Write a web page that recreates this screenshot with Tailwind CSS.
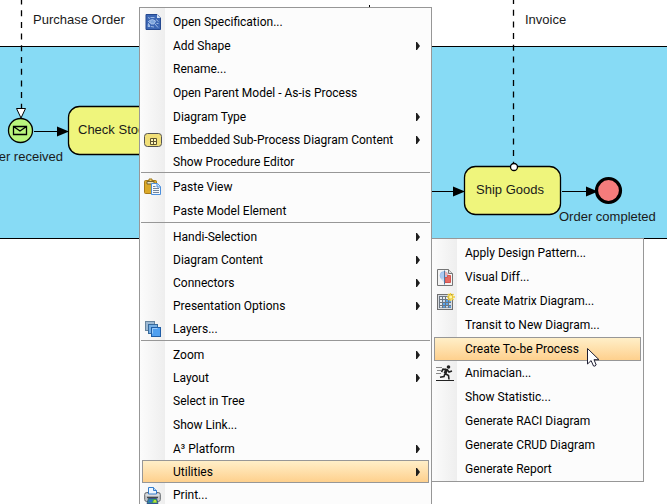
<!DOCTYPE html>
<html lang="en">
<head>
<meta charset="utf-8">
<title>Process diagram</title>
<script src="https://cdn.jsdelivr.net/npm/@tailwindcss/browser@4"></script>
</head>
<body class="bg-white">
<main class="relative h-screen overflow-hidden bg-white">

  <!-- Pool -->
  <div class="absolute inset-x-0 top-[46px] h-[193px] border-y border-black bg-[#87dbf5]"></div>

  <!-- Process diagram -->
  <svg class="absolute left-0 top-0 h-[260px] w-[667px] font-['Liberation_Sans',Arial,sans-serif] text-[13px]" viewBox="0 0 667 260" fill="none" stroke="#000">
    <path d="M21.500 -1.500V108" stroke-dasharray="6 5.700" stroke-width="1.300"/>
    <path d="M16.500 108.500h9l-4.500 9.500z" fill="#fff"/>
    <circle cx="20.500" cy="130.500" r="12" fill="#b9f57c" stroke-width="1.300"/>
    <path d="M13.500 126.500h13v8h-13zl6.500 4.500 6.500-4.500" stroke-width="1.300"/>
    <path d="M34 131.500H60"/>
    <path d="M57 126.500l12 5-12 5z" fill="#000" stroke="none"/>
    <rect x="68.500" y="106.500" width="96" height="48" rx="11" fill="#eff57c" stroke-width="1.300"/>
    <path d="M369.500 5v3"/>
    <path d="M513.500 -2V164" stroke-dasharray="6 5.700" stroke-width="1.300"/>
    <path d="M431 191.500H455"/>
    <path d="M453 186.500l12 5-12 5z" fill="#000" stroke="none"/>
    <rect x="464.500" y="166.500" width="96" height="48" rx="11" fill="#eff57c" stroke-width="1.300"/>
    <circle cx="514" cy="167" r="3.500" fill="#fff" stroke-width="1.300"/>
    <path d="M562 191.500H588"/>
    <path d="M586 186.500l12 5-12 5z" fill="#000" stroke="none"/>
    <circle cx="608.500" cy="190.500" r="12" fill="#f57c7c" stroke-width="3.200"/>
    <g fill="#1a1a1a" stroke="none">
      <text x="33" y="24">Purchase Order</text>
      <text x="78" y="134">Check Stock</text>
      <text x="63" y="161" text-anchor="end">Order received</text>
      <text x="525" y="24">Invoice</text>
      <text x="476" y="194">Ship Goods</text>
      <text x="559" y="221">Order completed</text>
    </g>
  </svg>

  <!-- Context menu -->
  <div role="menu" aria-label="Diagram" class="absolute left-[139px] top-[7px] w-[293px] border border-[#979797] bg-[#fcfcfc] bg-linear-to-r from-[#fcfcfc] to-[#eeeeee] bg-[length:25px_100%] bg-no-repeat px-[2px] py-[2px] font-['Segoe_UI','Roboto',sans-serif] text-[12px] text-black">
    <button role="menuitem" class="flex h-6 w-full items-center"><span class="flex w-[31px] pl-[3px]"><svg class="size-4" viewBox="0 0 16 16"><path d="M1 .5h11L15.500 4v11.500H1z" fill="#3c67b4" stroke="#24488f"/><path d="M12 .5V4h3.500z" fill="#dce8fa"/><path d="M3 3.500l2 1M5.500 3.500h4M3 12.500h2l-1.500-3zM4.500 6.500l3-1 3 1.500-1.500 3H6zM11 5.500l2.500 2M10 10l3 3.500M6 12.500l3 .5M11.500 9.500h2M3 7l2 2" fill="#7fa6dd" stroke="#b4cdf0" stroke-width=".8"/></svg></span>Open Specification...</button>
    <button role="menuitem" class="flex h-[23px] w-full items-center pl-[31px]"><span class="flex-1 text-left">Add Shape</span><svg class="mr-2 h-2 w-[5px]" viewBox="0 0 5 8"><path d="M0 0h1l3 4-3 4H0z" fill="#1e1e1e"/></svg></button>
    <button role="menuitem" class="flex h-6 w-full items-center pl-[31px]">Rename...</button>
    <button role="menuitem" class="flex h-6 w-full items-center pl-[31px]">Open Parent Model - As-is Process</button>
    <button role="menuitem" class="flex h-[23px] w-full items-center pl-[31px]"><span class="flex-1 text-left">Diagram Type</span><svg class="mr-2 h-2 w-[5px]" viewBox="0 0 5 8"><path d="M0 0h1l3 4-3 4H0z" fill="#1e1e1e"/></svg></button>
    <button role="menuitem" class="flex h-[23px] w-full items-center"><span class="flex w-[31px] pl-[2px]"><svg class="h-[14px] w-[18px]" viewBox="0 0 18 14"><rect x=".5" y=".5" width="17" height="13" rx="3" fill="#f1df78" stroke="#555"/><path d="M6.500 5.500h6v6h-6zM9.500 5.500v6M6.500 8.500h6" fill="#fff6b8" stroke="#5d5430"/></svg></span><span class="flex-1 text-left">Embedded Sub-Process Diagram Content</span><svg class="mr-2 h-2 w-[5px]" viewBox="0 0 5 8"><path d="M0 0h1l3 4-3 4H0z" fill="#1e1e1e"/></svg></button>
    <button role="menuitem" class="flex h-[22px] w-full items-center pl-[31px]">Show Procedure Editor</button>
    <div role="separator" class="-mx-px -mt-px mb-[2px] h-px bg-[#979797]"></div>
    <button role="menuitem" class="flex h-6 w-full items-center"><span class="flex w-[31px] pl-[2px]"><svg class="h-[18px] w-[17px]" viewBox="0 0 17 18"><rect x=".5" y="2.500" width="12" height="13" rx="1" fill="#dba928" stroke="#a87a18"/><path d="M3 3.500h7v2.500H3z" fill="#e9e2c0" stroke="#77652d"/><path d="M5 3V1h3v2" fill="#f6d66c" stroke="#9b7418"/><path d="M7.500 5.500h6l3 3v8h-9z" fill="#f4f9ff" stroke="#4c8fdc"/><path d="M13 5.500V9h3.500" fill="#cfe3fa" stroke="#4c8fdc"/><path d="M9 8.500h2.500M9 10.500h6M9 12.500h6M9 14.500h6" stroke="#75859a"/></svg></span>Paste View</button>
    <button role="menuitem" class="flex h-6 w-full items-center pl-[31px]">Paste Model Element</button>
    <div role="separator" class="-mx-px -mt-px mb-[2px] h-px bg-[#979797]"></div>
    <button role="menuitem" class="flex h-[23px] w-full items-center pl-[31px]"><span class="flex-1 text-left">Handi-Selection</span><svg class="mr-2 h-2 w-[5px]" viewBox="0 0 5 8"><path d="M0 0h1l3 4-3 4H0z" fill="#1e1e1e"/></svg></button>
    <button role="menuitem" class="flex h-[23px] w-full items-center pl-[31px]"><span class="flex-1 text-left">Diagram Content</span><svg class="mr-2 h-2 w-[5px]" viewBox="0 0 5 8"><path d="M0 0h1l3 4-3 4H0z" fill="#1e1e1e"/></svg></button>
    <button role="menuitem" class="flex h-[23px] w-full items-center pl-[31px]"><span class="flex-1 text-left">Connectors</span><svg class="mr-2 h-2 w-[5px]" viewBox="0 0 5 8"><path d="M0 0h1l3 4-3 4H0z" fill="#1e1e1e"/></svg></button>
    <button role="menuitem" class="flex h-[23px] w-full items-center pl-[31px]"><span class="flex-1 text-left">Presentation Options</span><svg class="mr-2 h-2 w-[5px]" viewBox="0 0 5 8"><path d="M0 0h1l3 4-3 4H0z" fill="#1e1e1e"/></svg></button>
    <button role="menuitem" class="flex h-6 w-full items-center"><span class="flex w-[31px] pl-[3px]"><svg class="size-4" viewBox="0 0 16 16"><rect x=".5" y=".5" width="9" height="9" fill="#9db9d3" stroke="#68859f"/><rect x="3.500" y="3.500" width="9" height="9" fill="#76afe4" stroke="#36699c"/><rect x="6.500" y="6.500" width="9" height="9" fill="#4e9ff0" stroke="#1f5da6"/><path d="M7.500 12.500v-5h5" fill="none" stroke="#9acbfa"/></svg></span>Layers...</button>
    <div role="separator" class="-mx-px -mt-px mb-[2px] h-px bg-[#979797]"></div>
    <button role="menuitem" class="flex h-[23px] w-full items-center pl-[31px]"><span class="flex-1 text-left">Zoom</span><svg class="mr-2 h-2 w-[5px]" viewBox="0 0 5 8"><path d="M0 0h1l3 4-3 4H0z" fill="#1e1e1e"/></svg></button>
    <button role="menuitem" class="flex h-[23px] w-full items-center pl-[31px]"><span class="flex-1 text-left">Layout</span><svg class="mr-2 h-2 w-[5px]" viewBox="0 0 5 8"><path d="M0 0h1l3 4-3 4H0z" fill="#1e1e1e"/></svg></button>
    <button role="menuitem" class="flex h-6 w-full items-center pl-[31px]">Select in Tree</button>
    <button role="menuitem" class="flex h-6 w-full items-center pl-[31px]">Show Link...</button>
    <button role="menuitem" class="flex h-[23px] w-full items-center pl-[31px]"><span class="flex-1 text-left">A³ Platform</span><svg class="mr-2 h-2 w-[5px]" viewBox="0 0 5 8"><path d="M0 0h1l3 4-3 4H0z" fill="#1e1e1e"/></svg></button>
    <button role="menuitem" aria-expanded="true" class="flex h-[23px] w-full items-center border border-[#979797] bg-linear-to-b from-[#ffefc8] to-[#fed08d] pl-[30px]"><span class="flex-1 text-left">Utilities</span><svg class="mr-[7px] h-2 w-[5px]" viewBox="0 0 5 8"><path d="M0 0h1l3 4-3 4H0z" fill="#1e1e1e"/></svg></button>
    <button role="menuitem" class="flex h-6 w-full items-center"><span class="flex w-[31px] pl-[2px]"><svg class="size-[17px]" viewBox="0 0 17 17"><rect x=".7" y="5.500" width="15.600" height="9" rx="2" fill="#c3c6ca" stroke="#65696e"/><path d="M1.500 8h14" stroke="#f0f1f2"/><path d="M4.500 7V.5h5l3 3V7z" fill="#edf6ff" stroke="#347dcb"/><path d="M9.500.5v3h3" fill="#b9d8f8" stroke="#347dcb"/><path d="M3 10.500h11" stroke="#44484c" stroke-width="1.500"/><path d="M4.500 11.500h8l1.500 5H3z" fill="#3ca84b" stroke="#34578f"/><path d="M5 12.500h4l-1 3H4z" fill="#2d6fd0"/><path d="M10 13h2l.7 2.500H9z" fill="#c3dd3e"/></svg></span>Print...</button>
  </div>

  <!-- Utilities submenu -->
  <div role="menu" aria-label="Utilities" class="absolute left-[431px] top-[238px] w-[213px] border border-[#979797] bg-[#fcfcfc] bg-linear-to-r from-[#fcfcfc] to-[#eeeeee] bg-[length:25px_100%] bg-no-repeat px-[2px] pt-[2px] font-['Segoe_UI','Roboto',sans-serif] text-[12px] text-black">
    <button role="menuitem" class="flex h-6 w-full items-center pl-[31px]">Apply Design Pattern...</button>
    <button role="menuitem" class="flex h-6 w-full items-center"><span class="flex w-[31px] pl-[3px]"><svg class="h-[17px] w-4" viewBox="0 0 16 17"><path d="M.5.5h11l4 4v12H.5z" fill="#f4f4f4" stroke="#747474"/><path d="M11.500.5v4h4" fill="#ddd" stroke="#747474"/><circle cx="7" cy="6.500" r="4" fill="#a9cbf4" stroke="#8fb4e3" stroke-width=".6"/><path d="M7.500 2.500a4 4 0 0 1 3.500 4h-3.500z" fill="#f1b1b1"/><path d="M3.500 9.500h4v4.500z" fill="#c8dcf4"/><path d="M8 8.500h2.500v-2h3v7H8z" fill="#e86a63" stroke="#d05650"/><path d="M7.500 1.500v14" stroke="#55779d"/></svg></span>Visual Diff...</button>
    <button role="menuitem" class="flex h-6 w-full items-center"><span class="flex w-[31px] pl-[3px]"><svg class="h-[17px] w-[18px]" viewBox="0 0 18 17"><rect x=".5" y="1.500" width="15" height="15" fill="#d7dbe0" stroke="#707070"/><path d="M2 3h12v12H2z" fill="#6b7682"/><path d="M3 4h2v2H3zM6 4h2v2H6zM9 4h2v2H9zM3 7h2v2H3zM3 10h2v2H3zM3 13h2v1.500H3z" fill="#e9edf1"/><path d="M6 7h2v2H6zM12 10h2v2h-2zM9 13h2v1.500H9z" fill="#c7d9ed"/><path d="M9 7h2v2H9zM12 7h2v2h-2zM6 10h2v2H6zM9 10h2v2H9zM6 13h2v1.500H6zM12 13h2v1.500h-2z" fill="#58a5ef"/><path d="M13.500 0v8M10 4h8M11 1l5.500 6M16.500 1L11 7" stroke="#f1cf3a" stroke-width="1.500"/><circle cx="13.700" cy="4" r="1.500" fill="#fff5a8"/></svg></span>Create Matrix Diagram...</button>
    <button role="menuitem" class="flex h-6 w-full items-center pl-[31px]">Transit to New Diagram...</button>
    <button role="menuitem" class="flex h-6 w-full items-center border border-[#979797] bg-linear-to-b from-[#ffefc8] to-[#fed08d] pl-[30px]">Create To-be Process</button>
    <button role="menuitem" class="flex h-6 w-full items-center"><span class="flex w-[31px] pl-[2px]"><svg class="h-4 w-[18px]" viewBox="0 0 18 16" fill="none" stroke="#222"><path d="M0 15.500h18"/><circle cx="12.500" cy="2" r="1.800" fill="#222" stroke="none"/><path d="M10.800 4L9 8.500" stroke-width="3"/><path d="M10.500 4.500L7 4.200 5.500 7M11 4.500l2 2.500 3-1M9 8.500l3.500 2 .5 4M9 8.500L8 11.500l-4 .7" stroke-width="1.600"/><path d="M0 2.500h6M1 5.500h4M0 8.500h5" stroke="#888"/></svg></span>Animacian...</button>
    <button role="menuitem" class="flex h-6 w-full items-center pl-[31px]">Show Statistic...</button>
    <button role="menuitem" class="flex h-6 w-full items-center pl-[31px]">Generate RACI Diagram</button>
    <button role="menuitem" class="flex h-6 w-full items-center pl-[31px]">Generate CRUD Diagram</button>
    <button role="menuitem" class="flex h-6 w-full items-center pl-[31px]">Generate Report</button>
  </div>

  <!-- Pointer -->
  <svg class="absolute left-[587px] top-[348px] h-[19px] w-[13px]" viewBox="0 0 13 19"><path d="M.5.500v15.500l3.600-3.400 2.400 5.400q1.500.7 2.700-1L7 11.700h5z" fill="#fff" stroke="#1f1f33"/></svg>
</main>
</body>
</html>
